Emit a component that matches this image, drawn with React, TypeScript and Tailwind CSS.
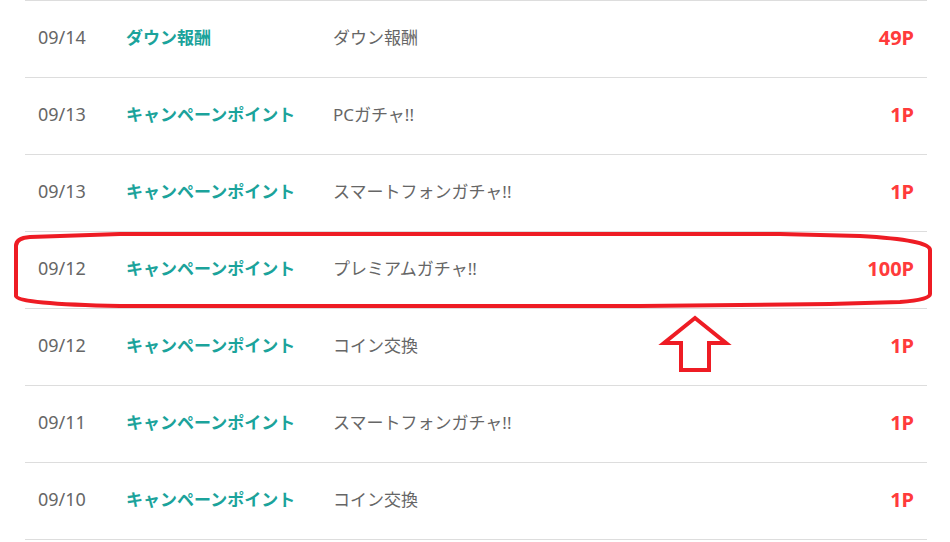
import React from "react";

const rows = [
  { date: "09/14", kind: "ダウン報酬", desc: "ダウン報酬", pt: "49P" },
  { date: "09/13", kind: "キャンペーンポイント", desc: "PCガチャ!!", pt: "1P" },
  { date: "09/13", kind: "キャンペーンポイント", desc: "スマートフォンガチャ!!", pt: "1P" },
  { date: "09/12", kind: "キャンペーンポイント", desc: "プレミアムガチャ!!", pt: "100P" },
  { date: "09/12", kind: "キャンペーンポイント", desc: "コイン交換", pt: "1P" },
  { date: "09/11", kind: "キャンペーンポイント", desc: "スマートフォンガチャ!!", pt: "1P" },
  { date: "09/10", kind: "キャンペーンポイント", desc: "コイン交換", pt: "1P" },
];

export default function App() {
  return (
    <div className="relative w-[950px] h-[542px] bg-white overflow-hidden font-['Noto_Sans','Noto_Sans_CJK_JP',sans-serif]">
      <div className="ml-[25px] w-[902px] border-t border-[#dddddd]">
        {rows.map((r, i) => (
          <div
            key={i}
            className="flex items-center h-[77px] pb-[3px] border-b border-[#dddddd] text-[17px]"
          >
            <div className="w-[101px] pl-[13px] text-[18px] text-[#666666]">{r.date}</div>
            <div className="w-[207px] font-bold text-[#1ba39b]">{r.kind}</div>
            <div className="flex-1 text-[#666666]">{r.desc}</div>
            <div className="pr-[13px] font-bold text-[20px] text-[#ff3b3b]">{r.pt}</div>
          </div>
        ))}
      </div>

      {/* annotation drawn over the list */}
      <svg
        className="absolute inset-0 pointer-events-none"
        width="950"
        height="542"
        viewBox="0 0 950 542"
        fill="none"
        stroke="#ee1c24"
        strokeWidth="4"
        strokeLinejoin="round"
      >
        <path d="M16 296 L16 246 Q16 238 30 237 L120 234 L780 234 L860 236 Q930 240 930 250 L930 294 Q930 300 900 302 L830 304 L640 306 L120 306 Q18 304 16 296 Z" />
        <path d="M695 318 L726 343 L709 343 L709 370 L681 370 L681 343 L664 343 Z" strokeLinejoin="miter" />
      </svg>
    </div>
  );
}
